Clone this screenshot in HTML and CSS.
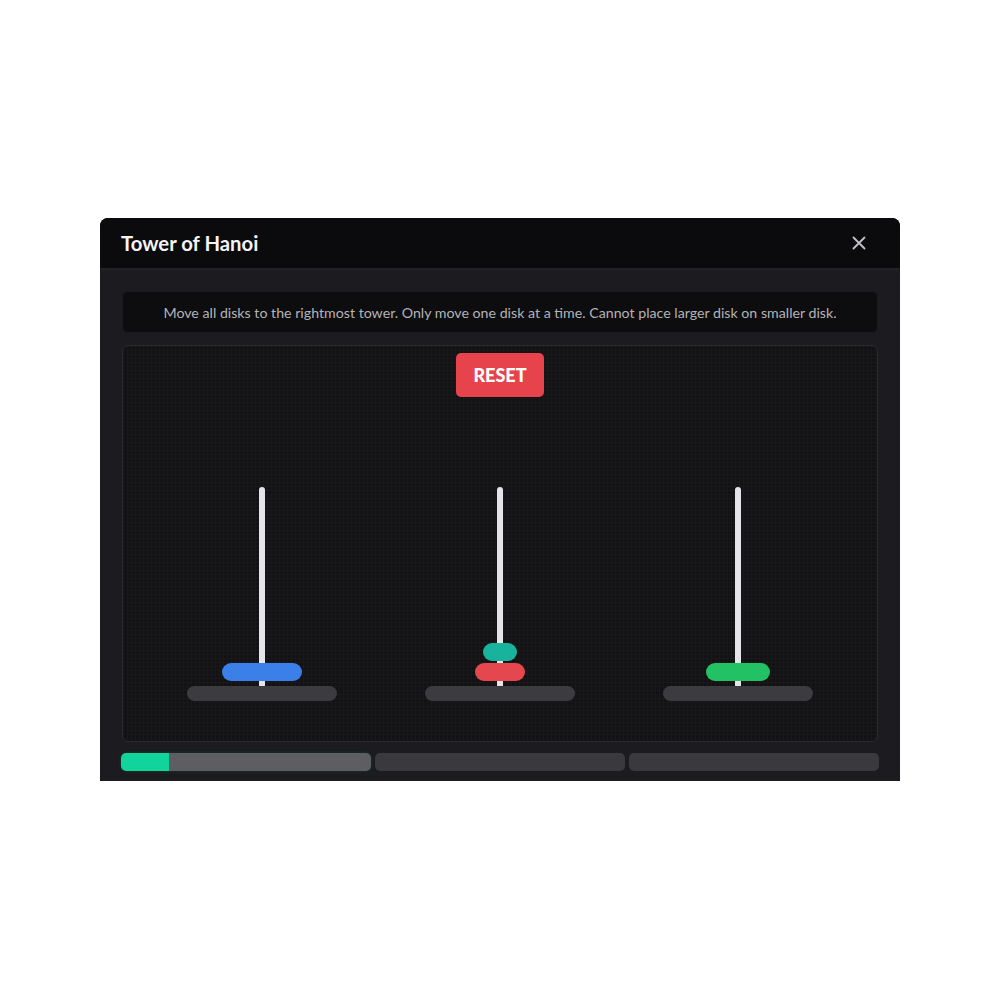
FILE: index.html
```html
<!DOCTYPE html>
<html lang="en">
<head>
    <meta charset="UTF-8">
    <meta name="viewport" content="width=device-width, initial-scale=1.0">
    <title>Tower of Hanoi</title>
    <link rel="stylesheet" href="styles.css">
</head>
<body>
    <div class="page">
        <div class="modal">
            <div class="modal-header">
                <h1>Tower of Hanoi</h1>
                <button class="close" aria-label="Close">
                    <svg width="16" height="16" viewBox="0 0 16 16">
                        <path d="M2.5 2.5 L13.5 13.5 M13.5 2.5 L2.5 13.5" stroke="#c4c3c7" stroke-width="1.8" stroke-linecap="round" fill="none"/>
                    </svg>
                </button>
            </div>

            <div class="modal-body">
                <div class="instructions">
                    Move all disks to the rightmost tower. Only move one disk at a time. Cannot place larger disk on smaller disk.
                </div>

                <div class="board">
                    <button class="reset">RESET</button>

                    <div class="towers">
                        <div class="tower">
                            <div class="peg">
                                <div class="disk blue" style="width: 80px"></div>
                            </div>
                            <div class="base"></div>
                        </div>
                        <div class="tower">
                            <div class="peg">
                                <div class="disk teal" style="width: 34px"></div>
                                <div class="disk red" style="width: 50px"></div>
                            </div>
                            <div class="base"></div>
                        </div>
                        <div class="tower">
                            <div class="peg">
                                <div class="disk green" style="width: 64px"></div>
                            </div>
                            <div class="base"></div>
                        </div>
                    </div>
                </div>

                <div class="progress">
                    <div class="segment active">
                        <div class="fill" style="width: 48px"></div>
                    </div>
                    <div class="segment"></div>
                    <div class="segment"></div>
                </div>
            </div>
        </div>
    </div>
</body>
</html>
```

FILE: styles.css
```css
body {
    margin: 0;
    background-color: #ffffff;
    font-family: Lato, "Open Sans", sans-serif;
}
.page {
    padding: 218px 0 0 100px;
}
.modal {
    width: 800px;
    background-color: #1c1b1f;
    border-radius: 8px 8px 0 0;
    overflow: hidden;
}
.modal-header {
    height: 50px;
    background-color: #0b0a0c;
    border-bottom: 2px solid #232226;
    display: flex;
    align-items: center;
    justify-content: space-between;
    padding: 0 33px 0 21px;
}
.modal-header h1 {
    margin: 0;
    font-size: 20.3px;
    font-weight: 700;
    color: #f4f4f6;
}
.close {
    background: none;
    border: none;
    padding: 0;
    width: 16px;
    height: 16px;
    cursor: pointer;
}
.modal-body {
    padding: 21px 21px 10px 21px;
}
.instructions {
    margin: 0 1px;
    height: 42px;
    box-sizing: border-box;
    background-color: #0d0c0e;
    border: 1px solid #1a191c;
    border-radius: 6px;
    display: flex;
    align-items: center;
    justify-content: center;
    font-size: 14.2px;
    color: #b4b3b8;
}
.board {
    margin: 12px 1px 0 1px;
    height: 397px;
    box-sizing: border-box;
    border: 1px solid #2a292d;
    border-radius: 6px;
    background-color: #121114;
    background-image:
        linear-gradient(#19181b 1px, transparent 1px),
        linear-gradient(90deg, #19181b 1px, transparent 1px);
    background-size: 4px 4px;
    display: flex;
    flex-direction: column;
    align-items: center;
    padding-top: 7px;
}
.reset {
    width: 88px;
    height: 44px;
    border: none;
    border-radius: 5px;
    background-color: #e6434c;
    color: #ffffff;
    font-family: Lato, sans-serif;
    font-size: 18px;
    font-weight: 900;
    cursor: pointer;
}
.towers {
    margin-top: 90px;
    display: flex;
    gap: 88px;
}
.tower {
    width: 150px;
    display: flex;
    flex-direction: column;
    align-items: center;
}
.peg {
    position: relative;
    width: 150px;
    height: 199px;
    display: flex;
    flex-direction: column;
    justify-content: flex-end;
    align-items: center;
    gap: 2px;
    padding-bottom: 5px;
    box-sizing: border-box;
}
.peg::before {
    content: "";
    position: absolute;
    left: 72px;
    top: 0;
    bottom: -2px;
    width: 6px;
    border-radius: 3px;
    background-color: #e6e4e8;
}
.disk {
    position: relative;
    height: 18px;
    border-radius: 9px;
}
.blue { background-color: #3b7fe8; }
.red { background-color: #e5474f; }
.teal { background-color: #17b39c; }
.green { background-color: #22c164; }
.base {
    position: relative;
    width: 150px;
    height: 15px;
    border-radius: 8px;
    background-color: #3c3b3f;
}
.progress {
    margin-top: 11px;
    display: flex;
    gap: 4px;
}
.segment {
    flex: 1;
    height: 18px;
    border-radius: 5px;
    background-color: #3a393d;
    overflow: hidden;
}
.segment.active {
    background-color: #5e5d62;
    box-shadow: 0 0 4px rgba(16, 212, 156, 0.15);
}
.fill {
    height: 100%;
    background-color: #10d49c;
    border-radius: 5px 0 0 5px;
}
```
